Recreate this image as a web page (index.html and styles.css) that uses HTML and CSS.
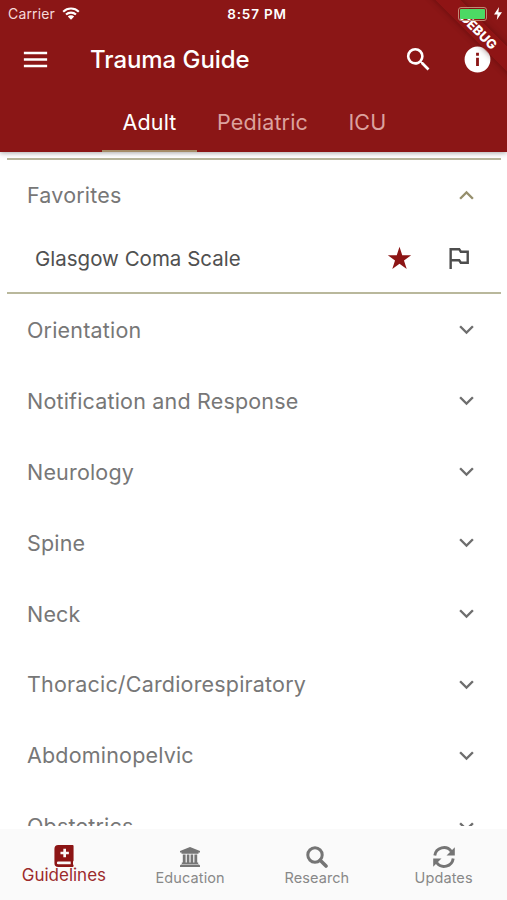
FILE: index.html
```
<!DOCTYPE html>
<html lang="en">
<head>
    <meta charset="UTF-8">
    <meta name="viewport" content="width=device-width, initial-scale=1.0">
    <title>Trauma Guide</title>
    <link rel="stylesheet" href="styles.css">
</head>
<body>
    <svg class="symbols" width="0" height="0">
        <symbol id="chevron" viewBox="0 0 24 24">
            <path d="M7.41 8.59L12 13.17l4.59-4.58L18 10l-6 6-6-6z"/>
        </symbol>
    </svg>

    <header class="header">
        <div class="status-bar">
            <div class="carrier">
                <span>Carrier</span>
                <svg class="wifi" viewBox="0 0 18 13">
                    <path d="M1.2 4.7a11.2 11.2 0 0 1 15.6 0M4 7.6a7.2 7.2 0 0 1 10 0" fill="none" stroke="#fff" stroke-width="2.1"/>
                    <path d="M9 12.8L5.8 9.6a4.6 4.6 0 0 1 6.4 0z" fill="#fff"/>
                </svg>
            </div>
            <div class="time">8:57 PM</div>
            <div class="power">
                <span class="battery"></span>
                <svg class="bolt" viewBox="0 0 8 13"><path d="M5 0L0 7.4h3.5L2.8 13 8 5.3H4.4z" fill="#fff"/></svg>
            </div>
        </div>
        <div class="toolbar">
            <svg class="menu-icon" viewBox="0 0 24 24"><path d="M3 18h18v-2H3v2zm0-5h18v-2H3v2zm0-7v2h18V6H3z"/></svg>
            <h1>Trauma Guide</h1>
            <svg class="search-icon" viewBox="0 0 24 24"><path d="M15.5 14h-.79l-.28-.27A6.47 6.47 0 0 0 16 9.5 6.5 6.5 0 1 0 9.5 16c1.61 0 3.09-.59 4.23-1.57l.27.28v.79l5 4.99L20.49 19l-4.99-5zm-6 0a4.5 4.5 0 1 1 0-9 4.5 4.5 0 0 1 0 9z"/></svg>
            <svg class="info-icon" viewBox="0 0 24 24"><path d="M12 2a10 10 0 1 0 0 20 10 10 0 0 0 0-20zm1.1 15h-2.2v-6.4h2.2V17zm0-8h-2.2V6.8h2.2V9z"/></svg>
        </div>
        <nav class="tabs">
            <a class="tab active">Adult</a>
            <a class="tab">Pediatric</a>
            <a class="tab">ICU</a>
        </nav>
        <div class="debug-clip"><div class="debug">DEBUG</div></div>
    </header>

    <main class="content">
        <section class="favorites">
            <div class="row open"><span>Favorites</span><svg class="chevron"><use href="#chevron"/></svg></div>
            <div class="favorite">
                <span>Glasgow Coma Scale</span>
                <svg class="star" viewBox="0 0 24 24"><path d="M12 .8l2.65 8.15H23.2l-6.9 5.02 2.63 8.13L12 17.1l-6.93 5 2.63-8.13L.8 8.95h8.55z"/></svg>
                <svg class="flag" viewBox="0 0 22 24"><path d="M2.3 23V2.3h8.9l1.7 2.6h7.2v11.5h-7.2l-1.7-2.6H2.3" /></svg>
            </div>
        </section>
        <div class="row"><span>Orientation</span><svg class="chevron"><use href="#chevron"/></svg></div>
        <div class="row"><span>Notification and Response</span><svg class="chevron"><use href="#chevron"/></svg></div>
        <div class="row"><span>Neurology</span><svg class="chevron"><use href="#chevron"/></svg></div>
        <div class="row"><span>Spine</span><svg class="chevron"><use href="#chevron"/></svg></div>
        <div class="row"><span>Neck</span><svg class="chevron"><use href="#chevron"/></svg></div>
        <div class="row"><span>Thoracic/Cardiorespiratory</span><svg class="chevron"><use href="#chevron"/></svg></div>
        <div class="row"><span>Abdominopelvic</span><svg class="chevron"><use href="#chevron"/></svg></div>
        <div class="row"><span>Obstetrics</span><svg class="chevron"><use href="#chevron"/></svg></div>
    </main>

    <nav class="bottom-nav">
        <a class="nav-item selected">
            <svg viewBox="0 0 20 23"><path fill-rule="evenodd" d="M4 0h15q1 0 1 1v15.2q0 .7-.6 1v3.2q.6.2.6 1V22q0 1-1 1H4a4 4 0 0 1-4-4V4a4 4 0 0 1 4-4zM9.3 4v3H6.3v2.8h3v3h2.8v-3h3V7h-3V4zM4 17.3a1.4 1.4 0 0 0 0 2.9h13v-2.9z"/></svg>
            <span>Guidelines</span>
        </a>
        <a class="nav-item">
            <svg viewBox="0 0 22 22"><path d="M11 1l10 4v1.6h-1.5v1.1h-17V6.6H1V5zM3.8 8.6h2.8v8h1.2v-8h2.6v8h1.2v-8h2.6v8h1.2v-8h2.8v8h1v1.3H2.8v-1.3h1zM2 18.5h18l1 1.1V21H1v-1.4z"/></svg>
            <span>Education</span>
        </a>
        <a class="nav-item">
            <svg viewBox="0 0 22 22"><circle cx="9" cy="9" r="7.2" fill="none" stroke="#757575" stroke-width="3"/><path d="M14.2 14.2l5.8 5.8" stroke="#757575" stroke-width="3.6" stroke-linecap="round"/></svg>
            <span>Research</span>
        </a>
        <a class="nav-item">
            <svg viewBox="0 0 22 22"><path d="M1.8 9.5a9.2 9.2 0 0 1 16.5-4.2M20.2 12.5a9.2 9.2 0 0 1-16.5 4.2" fill="none" stroke="#757575" stroke-width="2.9"/><path d="M21.8 1.2v8.2h-8.3zM.2 20.8v-8.2h8.3z"/></svg>
            <span>Updates</span>
        </a>
    </nav>
</body>
</html>
```

FILE: styles.css
```
* {
    box-sizing: border-box;
}
body {
    margin: 0;
    height: 900px;
    display: flex;
    flex-direction: column;
    overflow: hidden;
    background-color: #fff;
    font-family: Inter, "Liberation Sans", sans-serif;
}
svg {
    display: block;
    flex: none;
}
.symbols {
    position: absolute;
}

/* Header */
.header {
    position: relative;
    z-index: 1;
    height: 152px;
    flex: none;
    background-color: #8b1616;
    color: #fff;
    box-shadow: 0 1px 5px rgba(0, 0, 0, 0.35);
}
.status-bar {
    display: grid;
    grid-template-columns: 1fr auto 1fr;
    align-items: center;
    height: 27px;
    padding: 0 5px 0 8px;
    font-size: 14px;
}
.carrier {
    display: flex;
    align-items: center;
    gap: 7px;
    color: #f5dada;
    letter-spacing: 0.15px;
}
.wifi {
    width: 18px;
    height: 13px;
}
.time {
    font-size: 13.5px;
    font-weight: 600;
    letter-spacing: 0.8px;
    padding-left: 4px;
}
.power {
    position: relative;
    z-index: 2;
    display: flex;
    justify-content: flex-end;
    align-items: center;
    gap: 7px;
}
.battery {
    width: 29px;
    height: 14px;
    border: 1px solid #c18a75;
    border-radius: 3px;
    background-color: #4cd964;
    background-clip: content-box;
    padding: 1px;
}
.bolt {
    width: 8px;
    height: 13px;
}
.toolbar {
    display: flex;
    align-items: center;
    height: 65px;
    padding: 0 14px 0 20px;
    fill: #fff;
}
.toolbar h1 {
    flex: 1;
    margin: 0 0 0 39px;
    font-size: 24px;
    font-weight: 500;
    letter-spacing: -0.05px;
}
.menu-icon {
    width: 31px;
    height: 31px;
}
.search-icon {
    width: 31px;
    height: 31px;
    margin-right: 28px;
}
.info-icon {
    width: 31px;
    height: 31px;
}
.tabs {
    display: flex;
    height: 60px;
    padding-left: 102px;
}
.tab {
    display: flex;
    align-items: center;
    padding: 1px 20px 0 20.5px;
    font-size: 21.5px;
    letter-spacing: 0.15px;
    color: #dca29e;
    border-bottom: 2px solid transparent;
}
.tab.active {
    color: #fff;
    border-color: #a58d68;
}

/* Debug ribbon over the top right corner */
.debug-clip {
    position: absolute;
    top: 0;
    right: 0;
    width: 90px;
    height: 90px;
    overflow: hidden;
}
.debug {
    position: absolute;
    top: 22px;
    right: -42px;
    width: 140px;
    height: 18px;
    line-height: 18px;
    transform: rotate(45deg);
    background-color: rgba(144, 20, 22, 0.75);
    box-shadow: 0 0 6px rgba(50, 0, 0, 0.45);
    font-size: 13px;
    font-weight: 800;
    text-align: center;
}

/* Topic list */
.content {
    height: 674px;
    flex: none;
    overflow: hidden;
    padding: 6px 6px 0 7px;
}
.favorites {
    height: 136px;
    border-top: 2px solid #b7b69b;
    border-bottom: 2px solid #b9b89c;
}
.row {
    display: flex;
    justify-content: space-between;
    align-items: center;
    height: 70.9px;
    padding: 1px 20px 0;
    font-size: 21.5px;
    letter-spacing: 0.18px;
    color: #777;
    fill: #6e6e6e;
}
.row.open {
    height: 70px;
    padding-top: 0;
    fill: #968f6d;
}
.row.open .chevron {
    transform: rotate(180deg);
}
.chevron {
    width: 29px;
    height: 29px;
}
.favorite {
    display: flex;
    align-items: center;
    height: 56px;
    padding: 0 31px 0 28px;
    font-size: 20.5px;
    color: #505050;
}
.favorite span {
    flex: 1;
}
.star {
    width: 25px;
    height: 25px;
    margin-right: 36px;
    fill: #8c1515;
}
.flag {
    width: 22px;
    height: 23px;
    fill: none;
    stroke: #4d4d4d;
    stroke-width: 2.5;
}

/* Bottom navigation */
.bottom-nav {
    display: grid;
    grid-template-columns: repeat(4, 1fr);
    height: 71px;
    margin-top: 3px;
    flex: none;
    background-color: #fafafa;
}
.nav-item {
    display: flex;
    flex-direction: column;
    align-items: center;
    padding-top: 17px;
    font-size: 14.5px;
    line-height: 18px;
    letter-spacing: 0.1px;
    color: #888;
    fill: #757575;
}
.nav-item svg {
    width: 22px;
    height: 22px;
    margin-bottom: 1px;
}
.nav-item.selected {
    padding: 16px 0 0 1px;
    font-size: 17px;
    letter-spacing: 0;
    color: #9c2a2c;
    fill: #8c1515;
}
.nav-item.selected svg {
    margin-bottom: -1px;
}
```
